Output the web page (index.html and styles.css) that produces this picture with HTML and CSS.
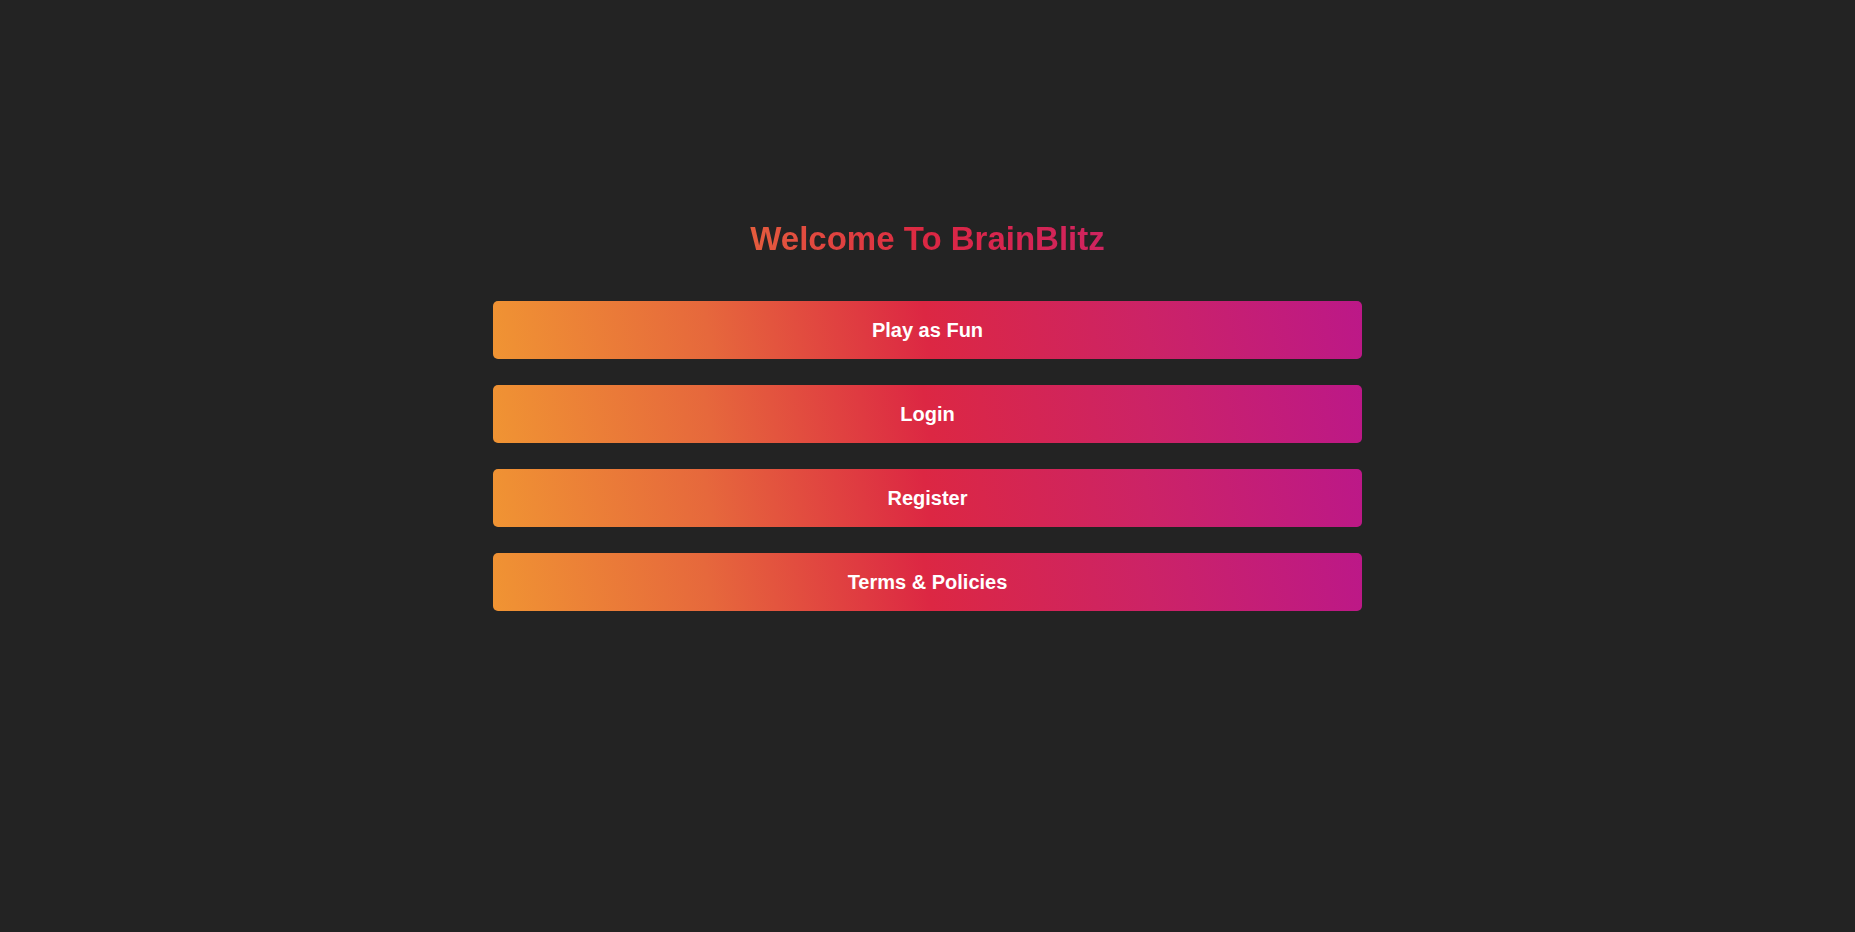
FILE: index.html
```html
<!DOCTYPE html>
<html lang="en">
<head>
<meta charset="utf-8">
<title>BrainBlitz</title>
<link rel="stylesheet" href="styles.css">
</head>
<body>
<main class="home">
  <h1 class="title">Welcome To BrainBlitz</h1>
  <nav class="menu">
    <button class="menu-btn" type="button">Play as Fun</button>
    <button class="menu-btn" type="button">Login</button>
    <button class="menu-btn" type="button">Register</button>
    <button class="menu-btn" type="button">Terms &amp; Policies</button>
  </nav>
</main>
</body>
</html>
```

FILE: styles.css
```css
html, body {
  margin: 0;
  padding: 0;
  height: 100%;
}

body {
  background: #232323;
  font-family: "Liberation Sans", Arial, sans-serif;
}

.home {
  width: 869px;
  margin: 0 auto;
  padding-top: 220px;
  display: flex;
  flex-direction: column;
}

.title {
  margin: 0 0 43px;
  height: 38px;
  font-size: 33px;
  font-weight: bold;
  line-height: 38px;
  text-align: center;
  background: linear-gradient(90deg, #f09433 0%, #e6683c 25%, #dc2743 50%, #cc2366 75%, #bc1888 100%);
  -webkit-background-clip: text;
  background-clip: text;
  color: transparent;
}

.menu {
  display: flex;
  flex-direction: column;
  gap: 26px;
}

.menu-btn {
  height: 58px;
  border: none;
  border-radius: 5px;
  padding: 0;
  background: linear-gradient(80deg, #f09433 0%, #e6683c 25%, #dc2743 50%, #cc2366 75%, #bc1888 100%);
  color: #ffffff;
  font-family: "Liberation Sans", Arial, sans-serif;
  font-size: 20px;
  font-weight: bold;
  cursor: pointer;
}
```
